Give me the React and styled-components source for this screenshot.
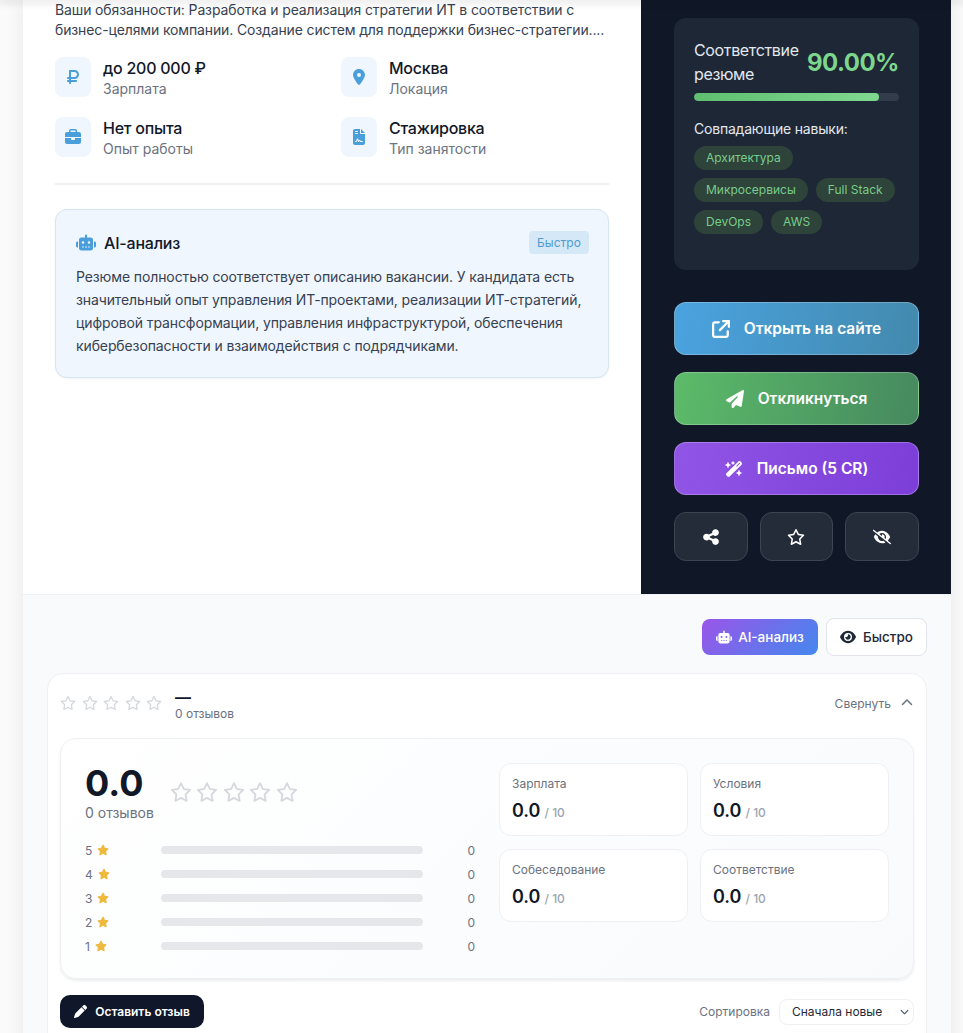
import React from "react";
import styled, { createGlobalStyle } from "styled-components";
import {
  FaRubleSign, FaLocationDot, FaBriefcase, FaFileContract, FaRobot,
  FaArrowUpRightFromSquare, FaPaperPlane, FaWandMagicSparkles, FaShareNodes,
  FaRegStar, FaEyeSlash, FaEye, FaPen, FaStar, FaChevronUp, FaChevronDown,
} from "react-icons/fa6";

const Global = createGlobalStyle`
  html, body { margin: 0; padding: 0; background: #fafafa; }
  body { font-family: Inter, "Noto Sans", sans-serif; color: #111827; }
  * { box-sizing: border-box; }
`;

const Viewport = styled.div`
  position: relative;
  height: 1033px;
  overflow: hidden;
  padding: 0 12px 0 23px;
`;
const TopShade = styled.div`
  position: absolute;
  left: 0; right: 0; top: 0;
  height: 0;
  box-shadow: 0 0 8px 2px rgba(0, 0, 0, 0.16);
  z-index: 3;
`;
const Shell = styled.div`
  background: #f8fafc;
  box-shadow: 0 0 18px rgba(0, 0, 0, 0.08);
`;
const Hero = styled.div`
  display: grid;
  grid-template-columns: 618px 310px;
  height: 594px;
`;
const Main = styled.div`
  background: #fff;
  padding: 0 32px;
`;
const Intro = styled.p`
  margin: 0 0 17px;
  font-size: 14px;
  line-height: 20px;
  letter-spacing: -0.13px;
  color: #374151;
  white-space: nowrap;
`;
const Facts = styled.div`
  display: grid;
  grid-template-columns: 268px 268px;
  gap: 18px 18px;
  padding-bottom: 24px;
  border-bottom: 2px solid #eff1f4;
`;
const Fact = styled.div`
  display: flex;
  gap: 12px;
  align-items: flex-start;
`;
const FactIcon = styled.div`
  width: 36px;
  height: 40px;
  border-radius: 8px;
  background: #eff6fd;
  color: #4a9fdb;
  display: flex;
  align-items: center;
  justify-content: center;
  font-size: 16px;
  flex: none;
`;
const FactText = styled.div`
  display: flex;
  flex-direction: column;
  padding-top: 1px;
`;
const FactTitle = styled.span`
  font-size: 16px;
  font-weight: 500;
  line-height: 21px;
  letter-spacing: -0.25px;
  color: #111827;
`;
const FactLabel = styled.span`
  font-size: 14px;
  line-height: 20px;
  color: #6b7280;
`;
const Analysis = styled.section`
  margin-top: 24px;
  height: 169px;
  border: 1px solid #d6e5f3;
  border-radius: 12px;
  background: #eff6fe;
  padding: 21px 19px 0 20px;
  box-shadow: 0 1px 2px rgba(15, 23, 42, 0.05);
`;
const AnalysisHead = styled.div`
  display: flex;
  align-items: center;
  justify-content: space-between;
  margin-bottom: 11px;
`;
const AnalysisTitle = styled.div`
  display: flex;
  align-items: center;
  gap: 8px;
  font-size: 16px;
  font-weight: 500;
  letter-spacing: -0.2px;
  color: #111827;
  svg { color: #4a9fdb; font-size: 17px; width: 20px; }
`;
const Badge = styled.span`
  height: 23px;
  width: 60px;
  border-radius: 4px;
  background: #d4e8f8;
  color: #4f9bd0;
  font-size: 12px;
  display: flex;
  align-items: center;
  justify-content: center;
`;
const AnalysisText = styled.p`
  margin: 0;
  font-size: 14px;
  line-height: 23px;
  letter-spacing: -0.11px;
  color: #374151;
  white-space: nowrap;
`;

const Side = styled.aside`
  background: #101827;
  padding: 18px 32px 0 33px;
  display: flex;
  flex-direction: column;
`;
const MatchCard = styled.div`
  height: 252px;
  border-radius: 12px;
  background: #1e2735;
  padding: 20px 20px 0;
  margin-bottom: 32px;
`;
const MatchHead = styled.div`
  display: flex;
  justify-content: space-between;
  align-items: center;
  margin-bottom: 7px;
`;
const MatchLabel = styled.div`
  font-size: 16px;
  line-height: 24px;
  letter-spacing: -0.35px;
  color: #e2e8f0;
`;
const MatchValue = styled.div`
  font-size: 24px;
  font-weight: 700;
  letter-spacing: -0.5px;
  color: #7cd68d;
`;
const Track = styled.div`
  height: 8px;
  border-radius: 4px;
  background: #333c4b;
  overflow: hidden;
  margin-bottom: 19px;
`;
const Fill = styled.div`
  height: 100%;
  border-radius: 4px;
  background: linear-gradient(90deg, #5fbf70, #7fd88f);
`;
const SkillsLabel = styled.div`
  font-size: 14px;
  line-height: 17px;
  letter-spacing: -0.2px;
  color: #e2e8f0;
  margin-bottom: 9px;
`;
const Chips = styled.div`
  display: flex;
  flex-wrap: wrap;
  gap: 8px;
  width: 205px;
`;
const Chip = styled.span`
  height: 24px;
  padding: 0 12px;
  border-radius: 12px;
  background: #2e4339;
  color: #78cc8c;
  font-size: 12px;
  line-height: 24px;
`;
const ActionStack = styled.div`
  display: flex;
  flex-direction: column;
  gap: 17px;
`;
const Action = styled.div`
  height: 53px;
  border-radius: 12px;
  border: 1px solid rgba(255, 255, 255, 0.25);
  background: ${p => p.$bg};
  color: #fff;
  font-size: 15.5px;
  font-weight: 600;
  display: flex;
  align-items: center;
  justify-content: center;
  gap: 14px;
  svg { font-size: 18px; }
`;
const IconRow = styled.div`
  display: grid;
  grid-template-columns: repeat(3, 1fr);
  gap: 12px;
`;
const IconAction = styled.div`
  height: 49px;
  border-radius: 12px;
  background: #252c39;
  border: 1px solid #3d4452;
  color: #fff;
  font-size: 18px;
  display: flex;
  align-items: center;
  justify-content: center;
`;

const Lower = styled.div`
  border-top: 1px solid #eef1f5;
  padding: 23px 24px 0;
`;
const Switcher = styled.div`
  display: flex;
  justify-content: flex-end;
  align-items: center;
  gap: 8px;
  margin-bottom: 17px;
`;
const ModeOn = styled.div`
  width: 116px;
  height: 36px;
  border-radius: 8px;
  background: linear-gradient(135deg, #9a55e8, #4488ee);
  color: #fff;
  font-size: 13.5px;
  font-weight: 500;
  display: flex;
  align-items: center;
  justify-content: center;
  gap: 6px;
  svg { font-size: 16px; }
`;
const ModeOff = styled.div`
  width: 101px;
  height: 38px;
  border-radius: 8px;
  background: #fff;
  border: 1px solid #e1e4e9;
  color: #1f2937;
  font-size: 13.5px;
  font-weight: 500;
  display: flex;
  align-items: center;
  justify-content: center;
  gap: 7px;
  svg { font-size: 16px; }
`;
const Reviews = styled.section`
  background: #fff;
  border: 1px solid #eef0f3;
  border-radius: 16px;
  padding: 9px 12px 40px;
  height: 420px;
`;
const ReviewsHead = styled.div`
  display: flex;
  align-items: center;
  justify-content: space-between;
  height: 40px;
  margin-bottom: 15px;
`;
const HeadLeft = styled.div`
  display: flex;
  align-items: center;
  gap: 13px;
`;
const Stars = styled.div`
  display: flex;
  gap: ${p => p.$gap}px;
  color: #d5d8dd;
  font-size: ${p => p.$size}px;
  svg { display: block; }
`;
const HeadScore = styled.div`
  display: flex;
  flex-direction: column;
  padding-top: 3px;
`;
const Dash = styled.span`
  font-size: 16px;
  font-weight: 700;
  line-height: 18px;
  color: #111827;
`;
const HeadCount = styled.span`
  font-size: 12px;
  line-height: 16px;
  color: #6b7280;
`;
const Collapse = styled.div`
  display: flex;
  align-items: center;
  gap: 10px;
  font-size: 12px;
  color: #6b7280;
  padding-right: 1px;
  svg { font-size: 12px; color: #6b7280; }
`;
const Summary = styled.div`
  height: 241px;
  border: 1px solid #eef0f3;
  border-radius: 16px;
  background: linear-gradient(135deg, #ffffff, #f8fafc);
  box-shadow: 0 2px 3px rgba(15, 23, 42, 0.08);
  padding: 24px 24px 0;
  display: grid;
  grid-template-columns: 390px 390px;
  gap: 24px;
`;
const Overall = styled.div`
  display: flex;
  align-items: center;
  gap: 16px;
  margin: -1px 0 21px;
`;
const BigBlock = styled.div`
  display: flex;
  flex-direction: column;
`;
const BigScore = styled.span`
  font-size: 36px;
  font-weight: 700;
  line-height: 42px;
  color: #111827;
`;
const BigCount = styled.span`
  font-size: 14px;
  line-height: 17px;
  color: #6b7280;
`;
const Dist = styled.div`
  display: flex;
  flex-direction: column;
  gap: 8px;
`;
const DistRow = styled.div`
  display: grid;
  grid-template-columns: 76px 262px 1fr;
  align-items: center;
  height: 16px;
  font-size: 12px;
  color: #6b7280;
`;
const DistLabel = styled.span`
  display: flex;
  align-items: center;
  gap: 5px;
  svg { color: #eeb93f; font-size: 12px; }
`;
const DistBar = styled.div`
  height: 8px;
  border-radius: 4px;
  background: #e5e7eb;
`;
const DistCount = styled.span`
  text-align: right;
  width: 52px;
`;
const Subscores = styled.div`
  display: grid;
  grid-template-columns: 189px 189px;
  grid-auto-rows: 73px;
  gap: 13px 12px;
  align-content: start;
`;
const ScoreCard = styled.div`
  background: #fff;
  border: 1px solid #eef0f3;
  border-radius: 12px;
  padding: 12px 12px 0;
`;
const ScoreLabel = styled.div`
  font-size: 12px;
  line-height: 16px;
  color: #6b7280;
  margin-bottom: 7px;
`;
const ScoreValue = styled.div`
  display: flex;
  align-items: baseline;
  gap: 4px;
  font-size: 18px;
  font-weight: 600;
  line-height: 24px;
  color: #111827;
`;
const ScoreMax = styled.span`
  font-size: 12px;
  font-weight: 500;
  color: #9ca3af;
`;
const Footer = styled.div`
  display: flex;
  align-items: center;
  justify-content: space-between;
  margin-top: 16px;
`;
const WriteBtn = styled.div`
  width: 144px;
  height: 33px;
  border-radius: 10px;
  background: #10172a;
  color: #fff;
  font-size: 12px;
  font-weight: 600;
  display: flex;
  align-items: center;
  justify-content: center;
  gap: 8px;
  svg { font-size: 13px; }
`;
const Sort = styled.div`
  display: flex;
  align-items: center;
  gap: 9px;
  font-size: 12px;
  color: #6b7280;
`;
const SortBox = styled.div`
  width: 135px;
  height: 26px;
  border: 1px solid #eef0f3;
  border-radius: 8px;
  background: #fff;
  color: #1f2937;
  display: flex;
  align-items: center;
  justify-content: space-between;
  padding: 0 4px 0 12px;
  svg { font-size: 9px; color: #4b5563; }
`;

const facts = [
  [<FaRubleSign />, "до 200 000 ₽", "Зарплата"],
  [<FaLocationDot />, "Москва", "Локация"],
  [<FaBriefcase />, "Нет опыта", "Опыт работы"],
  [<FaFileContract />, "Стажировка", "Тип занятости"],
];
const skills = ["Архитектура", "Микросервисы", "Full Stack", "DevOps", "AWS"];
const subs = ["Зарплата", "Условия", "Собеседование", "Соответствие"];
const five = [0, 1, 2, 3, 4];

export default function App() {
  return (
    <Viewport>
      <Global />
      <TopShade />
      <Shell>
        <Hero>
          <Main>
            <Intro>
              Ваши обязанности: Разработка и реализация стратегии ИТ в соответствии с<br />
              бизнес-целями компании. Создание систем для поддержки бизнес-стратегии....
            </Intro>
            <Facts>
              {facts.map(([icon, title, label]) => (
                <Fact key={label}>
                  <FactIcon>{icon}</FactIcon>
                  <FactText>
                    <FactTitle>{title}</FactTitle>
                    <FactLabel>{label}</FactLabel>
                  </FactText>
                </Fact>
              ))}
            </Facts>
            <Analysis>
              <AnalysisHead>
                <AnalysisTitle><FaRobot />AI-анализ</AnalysisTitle>
                <Badge>Быстро</Badge>
              </AnalysisHead>
              <AnalysisText>
                Резюме полностью соответствует описанию вакансии. У кандидата есть<br />
                значительный опыт управления ИТ-проектами, реализации ИТ-стратегий,<br />
                цифровой трансформации, управления инфраструктурой, обеспечения<br />
                кибербезопасности и взаимодействия с подрядчиками.
              </AnalysisText>
            </Analysis>
          </Main>
          <Side>
            <MatchCard>
              <MatchHead>
                <MatchLabel>Соответствие<br />резюме</MatchLabel>
                <MatchValue>90.00%</MatchValue>
              </MatchHead>
              <Track><Fill style={{ width: "90%" }} /></Track>
              <SkillsLabel>Совпадающие навыки:</SkillsLabel>
              <Chips>{skills.map(s => <Chip key={s}>{s}</Chip>)}</Chips>
            </MatchCard>
            <ActionStack>
              <Action $bg="linear-gradient(100deg, #4aa3e0, #4389ad)"><FaArrowUpRightFromSquare />Открыть на сайте</Action>
              <Action $bg="linear-gradient(100deg, #5cbb69, #46895f)"><FaPaperPlane />Откликнуться</Action>
              <Action $bg="linear-gradient(100deg, #9155e6, #7c3ed8)"><FaWandMagicSparkles />Письмо (5 CR)</Action>
              <IconRow>
                <IconAction><FaShareNodes /></IconAction>
                <IconAction><FaRegStar /></IconAction>
                <IconAction><FaEyeSlash /></IconAction>
              </IconRow>
            </ActionStack>
          </Side>
        </Hero>
        <Lower>
          <Switcher>
            <ModeOn><FaRobot />AI-анализ</ModeOn>
            <ModeOff><FaEye />Быстро</ModeOff>
          </Switcher>
          <Reviews>
            <ReviewsHead>
              <HeadLeft>
                <Stars $gap={5.5} $size={16}>{five.map(i => <FaRegStar key={i} />)}</Stars>
                <HeadScore>
                  <Dash>—</Dash>
                  <HeadCount>0 отзывов</HeadCount>
                </HeadScore>
              </HeadLeft>
              <Collapse>Свернуть <FaChevronUp /></Collapse>
            </ReviewsHead>
            <Summary>
              <div>
                <Overall>
                  <BigBlock>
                    <BigScore>0.0</BigScore>
                    <BigCount>0 отзывов</BigCount>
                  </BigBlock>
                  <Stars $gap={4.5} $size={22}>{five.map(i => <FaRegStar key={i} />)}</Stars>
                </Overall>
                <Dist>
                  {[5, 4, 3, 2, 1].map(n => (
                    <DistRow key={n}>
                      <DistLabel>{n}<FaStar /></DistLabel>
                      <DistBar />
                      <DistCount>0</DistCount>
                    </DistRow>
                  ))}
                </Dist>
              </div>
              <Subscores>
                {subs.map(s => (
                  <ScoreCard key={s}>
                    <ScoreLabel>{s}</ScoreLabel>
                    <ScoreValue>0.0 <ScoreMax>/ 10</ScoreMax></ScoreValue>
                  </ScoreCard>
                ))}
              </Subscores>
            </Summary>
            <Footer>
              <WriteBtn><FaPen />Оставить отзыв</WriteBtn>
              <Sort>
                Сортировка
                <SortBox>Сначала новые <FaChevronDown /></SortBox>
              </Sort>
            </Footer>
          </Reviews>
        </Lower>
      </Shell>
    </Viewport>
  );
}
